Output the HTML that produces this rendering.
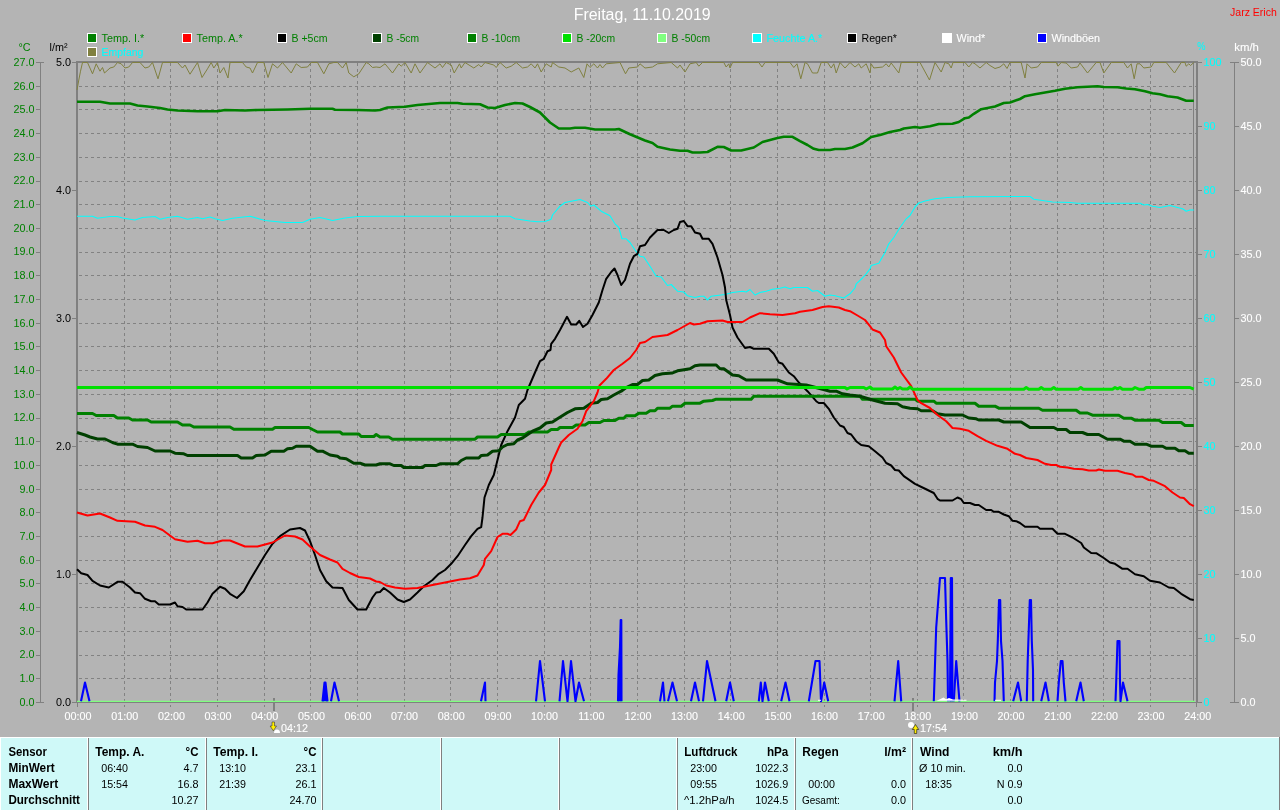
<!DOCTYPE html><html><head><meta charset="utf-8"><title>Freitag, 11.10.2019</title>
<style>html,body{margin:0;padding:0;background:#b4b4b4;overflow:hidden}body{width:1280px;height:810px;position:relative;font-family:"Liberation Sans",Arial,sans-serif}
svg{position:absolute;left:0;top:0;display:block;will-change:transform}
svg text{font-family:"Liberation Sans",Arial,sans-serif;font-size:11.7px}svg.tb text{font-size:11.2px}
.t{font-size:16px;fill:#fff}.g{fill:#008000}.k{fill:#000}.c{fill:#00ffff;stroke:#00ffff;stroke-width:.1px}.w{fill:#fff;stroke:#fff;stroke-width:.12px}.r{fill:#ff0000}.e{text-anchor:end}svg.tb text.b{font-weight:bold;font-size:12px}.m{text-anchor:middle}
.ln{fill:none;stroke-linejoin:round;stroke-linecap:butt}
</style></head><body>
<svg width="1280" height="810" viewBox="0 0 1280 810">
<rect width="1280" height="810" fill="#b4b4b4"/>
<text class="t m" x="642.2" y="20.3" textLength="137" lengthAdjust="spacingAndGlyphs">Freitag, 11.10.2019</text>
<text class="r e" transform="translate(1276.8 15.9) scale(0.923 1)" textLength="50.7" lengthAdjust="spacingAndGlyphs">Jarz Erich</text>
<rect x="87.5" y="33.5" width="9" height="9" fill="#008000" stroke="#fff" stroke-width="1"/>
<text class="g" transform="translate(101.5 42.0) scale(0.923 1)">Temp. I.*</text>
<rect x="182.5" y="33.5" width="9" height="9" fill="#ff0000" stroke="#fff" stroke-width="1"/>
<text class="g" transform="translate(196.5 42.0) scale(0.923 1)">Temp. A.*</text>
<rect x="277.5" y="33.5" width="9" height="9" fill="#000000" stroke="#fff" stroke-width="1"/>
<text class="g" transform="translate(291.5 42.0) scale(0.923 1)" textLength="39.0" lengthAdjust="spacingAndGlyphs">B +5cm</text>
<rect x="372.5" y="33.5" width="9" height="9" fill="#004000" stroke="#fff" stroke-width="1"/>
<text class="g" transform="translate(386.5 42.0) scale(0.923 1)" textLength="35.3" lengthAdjust="spacingAndGlyphs">B -5cm</text>
<rect x="467.5" y="33.5" width="9" height="9" fill="#008000" stroke="#fff" stroke-width="1"/>
<text class="g" transform="translate(481.5 42.0) scale(0.923 1)" textLength="41.8" lengthAdjust="spacingAndGlyphs">B -10cm</text>
<rect x="562.5" y="33.5" width="9" height="9" fill="#00e000" stroke="#fff" stroke-width="1"/>
<text class="g" transform="translate(576.5 42.0) scale(0.923 1)" textLength="41.8" lengthAdjust="spacingAndGlyphs">B -20cm</text>
<rect x="657.5" y="33.5" width="9" height="9" fill="#80ff80" stroke="#fff" stroke-width="1"/>
<text class="g" transform="translate(671.5 42.0) scale(0.923 1)" textLength="41.8" lengthAdjust="spacingAndGlyphs">B -50cm</text>
<rect x="752.5" y="33.5" width="9" height="9" fill="#00ffff" stroke="#fff" stroke-width="1"/>
<text class="c" transform="translate(766.5 42.0) scale(0.923 1)">Feuchte A.*</text>
<rect x="847.5" y="33.5" width="9" height="9" fill="#000000" stroke="#fff" stroke-width="1"/>
<text class="k" transform="translate(861.5 42.0) scale(0.923 1)" textLength="38.4" lengthAdjust="spacingAndGlyphs">Regen*</text>
<rect x="942.5" y="33.5" width="9" height="9" fill="#ffffff" stroke="#fff" stroke-width="1"/>
<text class="w" transform="translate(956.5 42.0) scale(0.923 1)">Wind*</text>
<rect x="1037.5" y="33.5" width="9" height="9" fill="#0000ff" stroke="#fff" stroke-width="1"/>
<text class="w" transform="translate(1051.5 42.0) scale(0.923 1)">Windböen</text>
<rect x="87.5" y="47.5" width="9" height="9" fill="#808040" stroke="#fff" stroke-width="1"/>
<text class="c" transform="translate(101.5 56.0) scale(0.923 1)" textLength="45.3" lengthAdjust="spacingAndGlyphs">Empfang</text>
<text class="g e" transform="translate(30.5 51.0) scale(0.923 1)">°C</text>
<text class="k e" transform="translate(67.5 51.0) scale(0.923 1)">l/m²</text>
<text class="c" transform="translate(1197.3 50.2) scale(0.923 1)" textLength="8.9" lengthAdjust="spacingAndGlyphs">%</text>
<text class="w" transform="translate(1234.3 51.0) scale(0.923 1)" textLength="26.7" lengthAdjust="spacingAndGlyphs">km/h</text>
<g stroke="#828282" stroke-width="1" stroke-dasharray="3 3" shape-rendering="crispEdges" fill="none">
<line x1="79" x2="1196" y1="678.5" y2="678.5"/>
<line x1="79" x2="1196" y1="655.5" y2="655.5"/>
<line x1="79" x2="1196" y1="631.5" y2="631.5"/>
<line x1="79" x2="1196" y1="607.5" y2="607.5"/>
<line x1="79" x2="1196" y1="583.5" y2="583.5"/>
<line x1="79" x2="1196" y1="560.5" y2="560.5"/>
<line x1="79" x2="1196" y1="536.5" y2="536.5"/>
<line x1="79" x2="1196" y1="512.5" y2="512.5"/>
<line x1="79" x2="1196" y1="489.5" y2="489.5"/>
<line x1="79" x2="1196" y1="465.5" y2="465.5"/>
<line x1="79" x2="1196" y1="441.5" y2="441.5"/>
<line x1="79" x2="1196" y1="418.5" y2="418.5"/>
<line x1="79" x2="1196" y1="394.5" y2="394.5"/>
<line x1="79" x2="1196" y1="370.5" y2="370.5"/>
<line x1="79" x2="1196" y1="346.5" y2="346.5"/>
<line x1="79" x2="1196" y1="323.5" y2="323.5"/>
<line x1="79" x2="1196" y1="299.5" y2="299.5"/>
<line x1="79" x2="1196" y1="275.5" y2="275.5"/>
<line x1="79" x2="1196" y1="252.5" y2="252.5"/>
<line x1="79" x2="1196" y1="228.5" y2="228.5"/>
<line x1="79" x2="1196" y1="204.5" y2="204.5"/>
<line x1="79" x2="1196" y1="181.5" y2="181.5"/>
<line x1="79" x2="1196" y1="157.5" y2="157.5"/>
<line x1="79" x2="1196" y1="133.5" y2="133.5"/>
<line x1="79" x2="1196" y1="109.5" y2="109.5"/>
<line x1="79" x2="1196" y1="86.5" y2="86.5"/>
<line x1="124.5" x2="124.5" y1="63" y2="707"/>
<line x1="170.5" x2="170.5" y1="63" y2="707"/>
<line x1="217.5" x2="217.5" y1="63" y2="707"/>
<line x1="264.5" x2="264.5" y1="63" y2="707"/>
<line x1="310.5" x2="310.5" y1="63" y2="707"/>
<line x1="357.5" x2="357.5" y1="63" y2="707"/>
<line x1="404.5" x2="404.5" y1="63" y2="707"/>
<line x1="450.5" x2="450.5" y1="63" y2="707"/>
<line x1="497.5" x2="497.5" y1="63" y2="707"/>
<line x1="544.5" x2="544.5" y1="63" y2="707"/>
<line x1="590.5" x2="590.5" y1="63" y2="707"/>
<line x1="637.5" x2="637.5" y1="63" y2="707"/>
<line x1="684.5" x2="684.5" y1="63" y2="707"/>
<line x1="730.5" x2="730.5" y1="63" y2="707"/>
<line x1="777.5" x2="777.5" y1="63" y2="707"/>
<line x1="824.5" x2="824.5" y1="63" y2="707"/>
<line x1="870.5" x2="870.5" y1="63" y2="707"/>
<line x1="917.5" x2="917.5" y1="63" y2="707"/>
<line x1="963.5" x2="963.5" y1="63" y2="707"/>
<line x1="1010.5" x2="1010.5" y1="63" y2="707"/>
<line x1="1057.5" x2="1057.5" y1="63" y2="707"/>
<line x1="1103.5" x2="1103.5" y1="63" y2="707"/>
<line x1="1150.5" x2="1150.5" y1="63" y2="707"/>
</g>
<g fill="#808080" shape-rendering="crispEdges">
<rect x="76" y="61" width="1122" height="2"/>
<rect x="76" y="61" width="2" height="642"/>
<rect x="1193" y="61" width="1" height="642"/>
<rect x="1196" y="61" width="2" height="642"/>
<rect x="40" y="62" width="1" height="641"/>
<rect x="1234" y="62" width="1" height="641"/>
<rect x="76" y="702" width="1120" height="1"/>
<rect x="36" y="702" width="8" height="1"/>
<rect x="36" y="678" width="4" height="1"/>
<rect x="36" y="655" width="4" height="1"/>
<rect x="36" y="631" width="4" height="1"/>
<rect x="36" y="607" width="4" height="1"/>
<rect x="36" y="583" width="4" height="1"/>
<rect x="36" y="560" width="4" height="1"/>
<rect x="36" y="536" width="4" height="1"/>
<rect x="36" y="512" width="4" height="1"/>
<rect x="36" y="489" width="4" height="1"/>
<rect x="36" y="465" width="4" height="1"/>
<rect x="36" y="441" width="4" height="1"/>
<rect x="36" y="418" width="4" height="1"/>
<rect x="36" y="394" width="4" height="1"/>
<rect x="36" y="370" width="4" height="1"/>
<rect x="36" y="346" width="4" height="1"/>
<rect x="36" y="323" width="4" height="1"/>
<rect x="36" y="299" width="4" height="1"/>
<rect x="36" y="275" width="4" height="1"/>
<rect x="36" y="252" width="4" height="1"/>
<rect x="36" y="228" width="4" height="1"/>
<rect x="36" y="204" width="4" height="1"/>
<rect x="36" y="181" width="4" height="1"/>
<rect x="36" y="157" width="4" height="1"/>
<rect x="36" y="133" width="4" height="1"/>
<rect x="36" y="109" width="4" height="1"/>
<rect x="36" y="86" width="4" height="1"/>
<rect x="36" y="62" width="8" height="1"/>
<rect x="72" y="702" width="5" height="1"/>
<rect x="72" y="574" width="5" height="1"/>
<rect x="72" y="446" width="5" height="1"/>
<rect x="72" y="318" width="5" height="1"/>
<rect x="72" y="190" width="5" height="1"/>
<rect x="72" y="62" width="5" height="1"/>
<rect x="1198" y="702" width="4" height="1"/>
<rect x="1230" y="702" width="9" height="1"/>
<rect x="1198" y="638" width="4" height="1"/>
<rect x="1235" y="638" width="4" height="1"/>
<rect x="1198" y="574" width="4" height="1"/>
<rect x="1235" y="574" width="4" height="1"/>
<rect x="1198" y="510" width="4" height="1"/>
<rect x="1235" y="510" width="4" height="1"/>
<rect x="1198" y="446" width="4" height="1"/>
<rect x="1235" y="446" width="4" height="1"/>
<rect x="1198" y="382" width="4" height="1"/>
<rect x="1235" y="382" width="4" height="1"/>
<rect x="1198" y="318" width="4" height="1"/>
<rect x="1235" y="318" width="4" height="1"/>
<rect x="1198" y="254" width="4" height="1"/>
<rect x="1235" y="254" width="4" height="1"/>
<rect x="1198" y="190" width="4" height="1"/>
<rect x="1235" y="190" width="4" height="1"/>
<rect x="1198" y="126" width="4" height="1"/>
<rect x="1235" y="126" width="4" height="1"/>
<rect x="1198" y="62" width="4" height="1"/>
<rect x="1230" y="62" width="9" height="1"/>
<rect x="77" y="703" width="1" height="4"/>
<rect x="1196" y="703" width="1" height="4"/>
<rect x="273" y="698" width="2" height="13"/>
<rect x="912" y="698" width="2" height="13"/>
</g>
<text class="g e" transform="translate(34.5 705.8) scale(0.923 1)">0.0</text>
<text class="g e" transform="translate(34.5 682.1) scale(0.923 1)">1.0</text>
<text class="g e" transform="translate(34.5 658.4) scale(0.923 1)">2.0</text>
<text class="g e" transform="translate(34.5 634.7) scale(0.923 1)">3.0</text>
<text class="g e" transform="translate(34.5 611.0) scale(0.923 1)">4.0</text>
<text class="g e" transform="translate(34.5 587.3) scale(0.923 1)">5.0</text>
<text class="g e" transform="translate(34.5 563.6) scale(0.923 1)">6.0</text>
<text class="g e" transform="translate(34.5 539.9) scale(0.923 1)">7.0</text>
<text class="g e" transform="translate(34.5 516.2) scale(0.923 1)">8.0</text>
<text class="g e" transform="translate(34.5 492.5) scale(0.923 1)">9.0</text>
<text class="g e" transform="translate(34.5 468.8) scale(0.923 1)">10.0</text>
<text class="g e" transform="translate(34.5 445.1) scale(0.923 1)">11.0</text>
<text class="g e" transform="translate(34.5 421.4) scale(0.923 1)">12.0</text>
<text class="g e" transform="translate(34.5 397.7) scale(0.923 1)">13.0</text>
<text class="g e" transform="translate(34.5 373.9) scale(0.923 1)">14.0</text>
<text class="g e" transform="translate(34.5 350.2) scale(0.923 1)">15.0</text>
<text class="g e" transform="translate(34.5 326.5) scale(0.923 1)">16.0</text>
<text class="g e" transform="translate(34.5 302.8) scale(0.923 1)">17.0</text>
<text class="g e" transform="translate(34.5 279.1) scale(0.923 1)">18.0</text>
<text class="g e" transform="translate(34.5 255.4) scale(0.923 1)">19.0</text>
<text class="g e" transform="translate(34.5 231.7) scale(0.923 1)">20.0</text>
<text class="g e" transform="translate(34.5 208.0) scale(0.923 1)">21.0</text>
<text class="g e" transform="translate(34.5 184.3) scale(0.923 1)">22.0</text>
<text class="g e" transform="translate(34.5 160.6) scale(0.923 1)">23.0</text>
<text class="g e" transform="translate(34.5 136.9) scale(0.923 1)">24.0</text>
<text class="g e" transform="translate(34.5 113.2) scale(0.923 1)">25.0</text>
<text class="g e" transform="translate(34.5 89.5) scale(0.923 1)">26.0</text>
<text class="g e" transform="translate(34.5 65.8) scale(0.923 1)">27.0</text>
<text class="k e" transform="translate(71.0 705.8) scale(0.923 1)">0.0</text>
<text class="k e" transform="translate(71.0 577.8) scale(0.923 1)">1.0</text>
<text class="k e" transform="translate(71.0 449.8) scale(0.923 1)">2.0</text>
<text class="k e" transform="translate(71.0 321.8) scale(0.923 1)">3.0</text>
<text class="k e" transform="translate(71.0 193.8) scale(0.923 1)">4.0</text>
<text class="k e" transform="translate(71.0 65.8) scale(0.923 1)">5.0</text>
<text class="c" transform="translate(1203.5 705.8) scale(0.923 1)">0</text>
<text class="w" transform="translate(1240.5 705.8) scale(0.923 1)">0.0</text>
<text class="c" transform="translate(1203.5 641.8) scale(0.923 1)">10</text>
<text class="w" transform="translate(1240.5 641.8) scale(0.923 1)">5.0</text>
<text class="c" transform="translate(1203.5 577.8) scale(0.923 1)">20</text>
<text class="w" transform="translate(1240.5 577.8) scale(0.923 1)">10.0</text>
<text class="c" transform="translate(1203.5 513.8) scale(0.923 1)">30</text>
<text class="w" transform="translate(1240.5 513.8) scale(0.923 1)">15.0</text>
<text class="c" transform="translate(1203.5 449.8) scale(0.923 1)">40</text>
<text class="w" transform="translate(1240.5 449.8) scale(0.923 1)">20.0</text>
<text class="c" transform="translate(1203.5 385.8) scale(0.923 1)">50</text>
<text class="w" transform="translate(1240.5 385.8) scale(0.923 1)">25.0</text>
<text class="c" transform="translate(1203.5 321.8) scale(0.923 1)">60</text>
<text class="w" transform="translate(1240.5 321.8) scale(0.923 1)">30.0</text>
<text class="c" transform="translate(1203.5 257.8) scale(0.923 1)">70</text>
<text class="w" transform="translate(1240.5 257.8) scale(0.923 1)">35.0</text>
<text class="c" transform="translate(1203.5 193.8) scale(0.923 1)">80</text>
<text class="w" transform="translate(1240.5 193.8) scale(0.923 1)">40.0</text>
<text class="c" transform="translate(1203.5 129.8) scale(0.923 1)">90</text>
<text class="w" transform="translate(1240.5 129.8) scale(0.923 1)">45.0</text>
<text class="c" transform="translate(1203.5 65.8) scale(0.923 1)">100</text>
<text class="w" transform="translate(1240.5 65.8) scale(0.923 1)">50.0</text>
<text class="w m" transform="translate(78.1 720.3) scale(0.923 1)">00:00</text>
<text class="w m" transform="translate(124.8 720.3) scale(0.923 1)">01:00</text>
<text class="w m" transform="translate(171.4 720.3) scale(0.923 1)">02:00</text>
<text class="w m" transform="translate(218.1 720.3) scale(0.923 1)">03:00</text>
<text class="w m" transform="translate(264.7 720.3) scale(0.923 1)">04:00</text>
<text class="w m" transform="translate(311.4 720.3) scale(0.923 1)">05:00</text>
<text class="w m" transform="translate(358.0 720.3) scale(0.923 1)">06:00</text>
<text class="w m" transform="translate(404.6 720.3) scale(0.923 1)">07:00</text>
<text class="w m" transform="translate(451.3 720.3) scale(0.923 1)">08:00</text>
<text class="w m" transform="translate(498.0 720.3) scale(0.923 1)">09:00</text>
<text class="w m" transform="translate(544.6 720.3) scale(0.923 1)">10:00</text>
<text class="w m" transform="translate(591.3 720.3) scale(0.923 1)">11:00</text>
<text class="w m" transform="translate(637.9 720.3) scale(0.923 1)">12:00</text>
<text class="w m" transform="translate(684.6 720.3) scale(0.923 1)">13:00</text>
<text class="w m" transform="translate(731.2 720.3) scale(0.923 1)">14:00</text>
<text class="w m" transform="translate(777.9 720.3) scale(0.923 1)">15:00</text>
<text class="w m" transform="translate(824.5 720.3) scale(0.923 1)">16:00</text>
<text class="w m" transform="translate(871.2 720.3) scale(0.923 1)">17:00</text>
<text class="w m" transform="translate(917.8 720.3) scale(0.923 1)">18:00</text>
<text class="w m" transform="translate(964.5 720.3) scale(0.923 1)">19:00</text>
<text class="w m" transform="translate(1011.1 720.3) scale(0.923 1)">20:00</text>
<text class="w m" transform="translate(1057.8 720.3) scale(0.923 1)">21:00</text>
<text class="w m" transform="translate(1104.4 720.3) scale(0.923 1)">22:00</text>
<text class="w m" transform="translate(1151.0 720.3) scale(0.923 1)">23:00</text>
<text class="w m" transform="translate(1197.7 720.3) scale(0.923 1)">24:00</text>
<polyline class="ln" stroke="#80ff80" stroke-width="1.2" points="77,701.3 1195,701.3"/>
<polyline class="ln" stroke="#808040" stroke-width="1" points="77.0,90.0 78.8,80.0 80.5,71.2 82.5,62.5 87.5,62.5 92.5,73.8 96.2,63.8 100.0,71.2 102.5,67.5 104.5,73.0 110.0,68.0 113.8,67.0 117.5,62.5 121.2,63.8 125.0,68.0 128.8,67.0 132.5,62.5 140.0,62.5 145.0,68.0 148.8,67.0 152.5,62.5 158.0,78.8 162.5,62.5 177.5,62.5 182.5,68.0 185.0,65.0 190.0,74.2 197.5,62.5 202.0,77.5 207.5,68.8 211.2,62.5 213.8,68.0 217.5,62.5 220.0,73.0 223.8,67.5 228.0,78.0 230.0,62.5 242.5,62.5 246.2,67.0 250.0,68.0 252.5,73.0 257.5,62.5 263.8,62.5 268.0,77.5 272.5,63.8 277.5,68.0 282.5,62.5 291.2,73.0 296.2,63.8 301.2,67.5 307.5,67.0 311.2,62.5 317.5,62.5 323.8,73.8 328.8,63.8 333.8,62.5 337.5,62.5 342.5,68.0 346.2,62.5 348.8,73.0 353.8,76.8 358.8,73.8 366.2,62.5 368.8,63.8 372.5,67.5 376.2,67.0 380.0,67.5 385.0,63.8 392.5,73.0 398.8,63.8 401.2,66.2 405.0,62.5 411.2,73.0 415.0,63.8 420.0,73.0 427.5,62.5 435.0,68.0 440.0,63.8 442.5,67.5 446.2,62.5 451.2,65.0 454.2,73.0 459.5,63.8 461.2,68.0 465.0,62.5 473.8,68.0 478.8,64.5 481.2,67.0 485.0,62.5 493.8,65.0 496.2,67.5 500.0,62.5 506.2,68.0 511.2,66.2 516.2,62.5 522.5,68.0 527.5,67.0 531.2,63.8 535.0,68.0 537.5,63.8 541.2,72.0 546.2,63.8 551.2,67.0 552.5,62.5 558.8,67.0 565.0,68.0 571.2,72.0 578.8,68.0 583.8,77.5 587.0,63.8 590.0,67.5 593.8,63.8 597.5,68.0 600.0,64.5 602.5,68.0 606.2,63.8 620.0,62.5 625.5,73.8 628.8,68.0 637.5,67.0 640.0,63.8 645.0,68.0 652.5,67.0 657.5,63.8 671.2,62.5 677.5,68.0 680.0,65.0 685.0,72.0 690.0,63.8 696.2,62.5 698.8,66.2 700.0,65.0 702.5,62.5 723.8,62.5 726.2,67.0 728.8,63.8 730.0,68.0 732.5,62.5 758.8,62.5 762.0,67.0 765.0,62.5 790.0,62.5 793.8,67.5 797.0,63.8 800.8,78.8 805.0,62.5 807.5,63.8 812.5,73.0 817.5,73.0 821.2,62.5 827.5,62.5 831.2,68.0 833.8,63.8 836.2,73.0 840.0,62.5 845.0,68.0 850.0,62.5 855.0,67.0 858.8,63.8 861.2,68.0 866.2,63.8 870.0,73.0 871.2,63.8 873.8,68.0 882.5,67.0 886.2,63.8 888.8,67.0 891.2,63.0 898.8,73.0 901.2,62.5 920.0,62.5 929.5,80.0 935.0,62.5 941.2,72.0 945.0,62.5 948.8,63.8 951.2,68.0 953.0,62.5 965.0,62.5 968.8,67.0 972.5,62.5 975.0,63.8 980.0,68.0 986.2,62.5 990.0,65.5 995.0,68.5 1000.0,67.0 1003.8,63.8 1007.0,68.5 1010.0,62.5 1020.0,62.5 1021.2,62.5 1025.0,78.0 1027.0,63.8 1031.2,68.0 1037.5,67.0 1041.2,62.5 1056.2,62.5 1058.0,66.2 1061.2,62.5 1066.2,63.0 1071.2,68.0 1077.5,67.0 1080.0,63.0 1087.5,73.0 1096.2,62.5 1100.0,62.5 1103.8,73.0 1111.2,62.5 1123.8,62.5 1127.5,68.0 1131.2,63.8 1134.2,78.8 1137.0,63.8 1140.0,63.8 1143.8,68.0 1151.2,67.0 1153.8,62.5 1166.2,62.5 1174.5,73.0 1181.2,62.5 1185.0,62.5 1186.2,66.2 1188.8,63.8 1190.5,65.5 1193.8,62.5"/>
<polyline class="ln" stroke="#00ffff" stroke-width="1.1" points="77.0,216.2 92.5,216.2 97.5,218.2 110.0,216.5 117.5,216.5 122.5,218.0 135.0,220.0 142.5,217.5 155.0,216.5 160.0,219.2 167.5,217.5 177.5,216.2 187.5,219.2 197.5,217.5 202.5,218.8 210.0,217.0 215.0,218.8 222.5,220.5 232.5,218.2 250.0,216.2 265.0,220.5 285.0,222.5 302.5,222.5 310.0,219.2 320.0,217.5 332.5,220.5 345.0,218.0 357.5,216.5 380.0,216.2 510.0,216.2 515.0,218.8 530.0,221.0 537.5,221.8 545.0,221.5 551.2,219.2 552.5,215.0 560.0,206.2 565.0,202.5 580.0,199.5 587.5,202.5 590.8,206.2 593.8,205.0 601.2,211.2 610.0,215.8 615.0,223.8 618.8,227.5 622.0,238.8 626.2,238.8 630.0,242.5 635.0,250.0 640.0,256.2 643.8,257.0 650.0,266.2 656.2,276.2 661.2,277.0 667.5,285.5 671.2,284.5 677.5,291.2 683.8,292.0 687.5,295.8 695.0,297.5 700.0,296.2 703.8,296.2 707.5,300.0 711.2,296.2 725.0,294.5 732.5,292.5 742.5,291.2 746.2,292.0 750.0,289.5 755.0,295.0 760.0,292.5 766.2,291.2 772.5,289.2 780.0,288.2 785.0,287.0 790.0,288.8 793.8,287.5 807.5,287.5 812.5,291.2 817.5,290.5 825.0,296.2 830.0,295.0 835.0,295.8 843.8,298.0 850.0,293.8 855.0,288.0 856.2,283.8 862.5,278.0 866.2,273.8 870.0,268.8 871.2,265.5 878.8,263.2 885.0,252.5 888.8,243.8 893.8,237.5 900.0,227.5 906.2,218.8 910.0,215.5 915.0,207.0 918.8,203.0 925.0,201.0 935.0,198.8 947.5,197.5 970.0,196.8 1020.0,196.5 1030.0,196.5 1033.8,199.2 1042.5,200.5 1052.5,202.0 1070.0,202.5 1077.5,203.2 1140.0,203.2 1143.8,205.0 1147.5,204.5 1152.5,206.2 1160.0,207.5 1170.0,205.5 1177.5,207.5 1182.5,208.8 1186.2,211.2 1190.0,210.0 1193.8,210.0"/>
<polyline class="ln" stroke="#008000" stroke-width="2.6" points="77.0,101.8 100.0,101.8 110.0,103.5 130.0,103.5 137.5,105.5 147.5,106.5 160.0,108.0 167.5,109.5 177.5,110.5 197.5,111.2 217.5,111.2 225.0,110.0 245.0,110.5 257.5,110.0 287.5,109.5 310.0,108.8 332.5,108.8 335.0,109.8 357.5,110.0 375.0,110.5 380.0,110.0 387.5,107.5 405.0,106.8 417.5,105.0 440.0,103.0 457.5,103.0 462.5,103.8 480.0,104.2 487.5,107.5 495.0,108.0 505.0,105.0 515.0,103.0 522.5,103.5 530.0,107.0 540.0,112.5 550.0,122.5 558.8,128.5 570.0,128.5 575.0,127.8 585.0,127.8 595.0,129.5 615.0,129.5 618.8,129.0 630.0,134.2 645.0,140.5 652.5,143.0 657.5,146.8 670.0,149.5 680.0,150.8 687.5,150.8 692.5,152.5 700.0,152.5 707.5,152.0 717.5,146.8 723.8,147.0 731.2,150.5 741.2,150.5 753.8,147.5 762.5,142.0 777.5,138.0 783.8,136.8 792.5,136.8 800.0,141.2 807.5,145.0 813.8,148.8 818.8,150.0 830.0,150.0 835.0,149.0 845.0,149.0 852.5,147.5 862.5,143.2 871.2,137.0 880.0,135.0 890.0,132.0 900.0,130.0 903.8,128.5 915.0,127.0 920.0,127.8 930.0,126.2 938.8,124.0 952.5,123.8 958.8,122.0 965.0,118.2 968.8,117.5 973.8,113.8 981.2,109.2 987.5,108.0 995.0,106.5 1003.8,103.0 1010.0,102.5 1020.0,99.0 1025.0,96.2 1035.0,94.2 1045.0,92.5 1055.0,90.8 1065.0,88.8 1077.5,87.2 1087.5,86.8 1097.5,86.2 1103.8,87.0 1117.5,87.2 1126.2,88.5 1135.0,89.2 1145.0,91.2 1152.5,93.2 1160.0,94.2 1167.5,96.2 1177.5,97.5 1186.2,100.8 1193.8,100.8"/>
<polyline class="ln" stroke="#000" stroke-width="2" points="77.0,569.2 81.2,573.2 87.5,575.0 92.5,580.8 100.0,585.5 108.8,587.5 117.5,581.8 122.5,581.8 130.0,587.5 135.0,592.5 140.0,593.2 145.0,598.8 151.2,601.2 155.0,601.2 158.8,604.5 170.0,604.5 175.0,602.5 177.5,606.2 182.5,607.0 186.2,609.5 202.5,609.5 207.5,602.5 212.5,593.8 220.0,586.8 225.0,588.8 230.0,593.8 237.0,598.0 243.8,591.2 250.0,580.0 257.5,567.5 265.0,555.0 272.5,543.8 280.0,536.2 290.0,529.5 300.0,528.0 305.0,530.5 310.0,541.2 315.0,555.0 320.0,570.0 326.2,581.2 332.5,587.5 342.5,588.0 348.8,600.0 357.5,609.5 366.2,609.5 372.5,597.5 376.2,592.5 380.0,592.0 383.8,588.0 390.0,592.5 397.5,599.5 403.8,602.0 410.0,599.5 417.5,592.5 423.8,586.2 432.5,580.0 438.8,573.8 445.0,570.0 451.2,563.8 457.5,556.2 465.0,545.0 471.2,536.2 477.5,528.8 481.2,527.0 482.5,517.5 484.5,497.5 488.8,485.0 493.8,475.0 497.5,460.0 501.2,445.0 507.5,431.2 515.0,417.5 518.8,405.0 525.0,398.8 527.5,390.0 535.0,372.5 540.0,361.2 543.8,358.8 547.5,351.2 550.5,350.0 551.2,343.8 555.0,338.8 560.0,330.0 567.0,316.8 571.2,324.5 576.2,324.5 579.2,320.8 583.0,327.0 587.5,323.8 592.5,315.0 598.8,302.5 602.5,290.0 606.2,278.8 611.2,272.0 614.5,268.5 617.5,275.0 621.2,285.0 625.0,280.0 630.0,263.8 633.8,256.2 637.5,253.8 640.0,246.2 645.0,245.0 650.0,237.5 657.5,230.0 663.8,230.0 668.8,233.0 673.8,230.0 677.5,228.8 680.0,222.0 683.8,221.0 687.5,226.2 691.2,226.2 695.0,232.5 700.0,233.8 702.5,238.8 708.8,238.8 712.5,243.8 717.5,257.5 722.5,275.0 725.0,287.5 726.2,300.0 730.0,315.0 732.5,327.5 737.5,337.5 745.0,348.0 750.0,347.0 753.8,348.8 768.8,348.8 773.8,353.8 778.8,362.5 782.5,363.8 788.8,372.5 793.8,376.2 798.8,382.5 807.5,391.2 816.2,401.2 818.8,403.0 823.8,403.0 828.8,408.8 833.8,417.5 840.0,425.5 843.8,427.0 847.5,433.0 851.2,434.5 856.2,441.2 861.2,445.0 868.8,446.2 875.0,451.2 882.5,457.5 886.2,463.0 891.2,465.5 895.0,470.0 898.8,470.5 903.8,476.2 915.0,483.8 922.5,487.5 933.8,493.0 937.5,498.8 940.0,500.5 952.5,500.5 957.5,497.5 961.2,499.2 963.8,503.0 970.0,503.0 975.0,505.0 978.8,505.0 986.2,510.0 991.2,510.0 993.8,511.8 998.8,511.8 1003.8,514.5 1008.8,516.2 1012.5,520.8 1016.2,521.2 1020.0,523.0 1025.0,526.8 1037.5,526.8 1040.0,528.8 1052.5,528.8 1057.5,533.8 1065.0,533.8 1072.5,537.5 1081.2,543.0 1083.8,547.5 1091.2,553.0 1096.2,553.2 1103.8,558.0 1110.0,562.5 1115.0,563.8 1122.5,568.8 1127.5,568.8 1135.0,574.2 1143.8,576.2 1150.0,580.8 1160.0,582.5 1168.8,587.5 1173.8,588.0 1181.2,593.8 1190.0,599.2 1193.8,600.0"/>
<polyline class="ln" stroke="#008000" stroke-width="3" points="77.0,413.5 92.5,413.5 96.2,415.5 113.8,415.5 117.5,418.0 128.8,418.0 132.5,420.0 147.5,420.0 151.2,422.0 177.5,422.0 182.5,425.0 190.0,425.0 193.8,427.0 230.0,427.0 233.8,429.2 272.5,429.2 275.0,427.5 308.8,427.5 312.5,429.5 317.5,432.0 340.0,432.0 342.5,434.0 358.8,434.0 361.2,436.5 373.8,436.5 376.2,434.5 380.0,437.0 388.8,437.0 392.5,439.2 475.0,439.2 477.5,437.0 497.5,437.0 501.2,434.5 525.0,434.5 528.8,432.0 547.5,432.0 551.2,429.5 557.5,429.5 560.0,427.5 572.5,427.5 576.2,425.0 585.0,425.0 588.8,422.5 600.0,422.5 603.8,420.5 615.0,420.5 618.8,418.2 623.8,418.2 626.2,415.8 635.0,415.8 638.8,413.2 646.2,413.2 650.0,410.8 655.0,410.8 657.5,408.2 670.0,408.2 672.5,406.2 681.2,406.2 685.0,403.2 700.0,403.2 703.8,401.2 712.5,400.5 716.2,399.2 751.2,399.2 753.8,396.2 860.0,396.2 862.5,399.2 915.0,399.2 917.5,401.2 933.8,401.2 936.2,403.2 975.0,403.2 978.8,406.2 995.0,406.2 998.8,408.2 1020.0,408.2 1038.8,408.2 1042.5,410.2 1076.2,410.2 1080.0,413.0 1087.5,413.0 1092.5,415.2 1118.8,415.2 1123.8,418.2 1131.2,418.2 1135.0,420.2 1158.8,420.2 1162.5,422.5 1181.2,422.5 1185.0,425.5 1193.8,425.5"/>
<polyline class="ln" stroke="#004000" stroke-width="3" points="77.0,432.5 85.0,435.0 90.0,437.0 97.5,439.0 105.0,439.0 112.5,442.5 117.5,444.2 132.5,444.2 137.5,446.5 147.5,447.5 155.0,451.0 170.0,451.0 175.0,453.2 183.8,453.8 187.5,455.5 237.5,455.5 241.2,458.0 252.5,458.0 256.2,455.5 265.0,455.0 271.2,451.2 283.8,451.2 287.5,448.8 292.5,448.2 296.2,446.2 310.0,446.2 317.5,451.2 322.5,451.2 330.0,455.0 337.5,456.2 340.0,458.0 346.2,458.8 353.8,463.2 360.0,463.2 365.0,465.0 376.2,465.0 380.0,463.8 390.0,463.8 393.8,465.5 401.2,465.5 403.8,467.5 422.5,467.5 425.0,465.5 436.2,465.5 440.0,463.8 457.5,463.8 461.2,460.5 466.2,458.0 478.8,458.0 481.2,455.5 487.5,455.0 492.5,451.2 498.8,450.8 502.5,447.0 507.5,444.5 513.8,443.8 517.5,440.0 522.5,438.0 532.5,431.2 540.0,428.0 546.2,423.0 552.5,422.0 557.5,418.8 567.5,412.5 575.0,408.8 583.8,408.2 591.2,403.2 597.5,402.5 601.2,399.5 607.5,398.8 613.8,395.0 621.2,391.2 626.2,387.5 632.5,384.5 637.5,384.5 642.5,380.5 648.8,380.0 655.0,375.5 662.5,373.8 672.5,373.0 677.5,370.8 682.5,370.0 690.0,368.8 695.0,365.8 700.0,365.0 716.2,365.0 720.0,368.8 723.8,368.8 732.5,375.0 738.8,375.8 746.2,380.0 777.5,380.0 787.5,383.8 806.2,385.0 822.5,389.2 830.0,391.2 836.2,391.2 842.5,393.8 850.0,395.0 860.0,396.2 872.5,400.0 885.0,403.2 897.5,403.8 902.5,406.8 910.0,408.2 917.5,408.8 921.2,410.8 932.5,410.8 937.5,413.8 945.0,415.0 962.5,415.0 968.8,418.0 976.2,418.8 978.8,420.0 998.8,420.0 1003.8,422.0 1020.0,422.0 1021.2,422.0 1030.0,427.5 1053.8,427.5 1057.5,429.5 1066.2,429.5 1070.0,432.5 1082.5,432.5 1087.5,434.5 1098.8,434.5 1107.5,439.2 1120.0,439.2 1123.8,441.2 1130.0,441.2 1135.0,444.2 1146.2,444.2 1151.2,446.2 1162.5,446.2 1166.2,448.2 1175.0,448.2 1178.8,450.8 1185.0,450.8 1188.8,453.2 1193.8,453.2"/>
<polyline class="ln" stroke="#ff0000" stroke-width="2" points="77.0,512.5 87.5,515.5 100.0,513.5 110.0,517.5 117.5,520.8 135.0,521.8 145.0,525.5 155.0,526.8 162.5,530.0 175.0,539.2 187.5,541.8 197.5,540.8 205.0,543.2 212.5,543.2 222.5,540.5 230.0,540.5 245.0,546.5 257.5,546.5 272.5,542.5 285.0,535.5 295.0,536.5 302.5,539.5 310.0,546.5 320.0,555.0 330.0,559.5 337.5,562.5 342.5,568.8 350.0,573.0 358.8,577.0 370.0,578.5 376.2,581.5 380.0,582.0 386.2,585.5 395.0,587.5 405.0,588.8 417.5,588.0 430.0,585.5 445.0,582.5 460.0,579.5 470.0,578.2 477.5,575.5 483.8,565.0 485.0,558.8 491.2,551.2 497.5,537.0 502.5,533.8 507.5,533.8 510.5,535.0 516.2,529.5 520.0,521.2 523.8,520.0 531.2,505.0 538.8,492.5 545.0,485.0 551.2,470.0 551.2,464.5 558.8,447.5 561.2,442.5 568.8,435.0 577.5,428.8 582.5,421.2 586.2,411.2 593.8,401.2 597.5,392.5 599.5,385.5 606.2,378.8 613.8,370.0 622.5,363.8 630.0,358.0 636.2,350.0 640.0,343.0 645.0,342.0 652.5,337.0 667.5,335.0 677.5,330.0 690.0,323.0 693.8,324.5 700.0,323.8 707.5,321.2 722.5,320.5 727.5,322.0 742.5,322.0 750.0,317.5 760.0,313.2 770.0,314.2 782.5,315.0 795.0,313.2 800.0,311.8 812.5,310.0 822.5,307.0 828.8,306.2 838.8,307.5 845.0,310.0 850.0,311.2 857.5,315.5 865.0,320.0 870.0,326.2 872.5,329.5 880.0,332.5 885.0,340.0 886.2,346.2 893.8,357.5 901.2,372.5 911.2,386.2 917.5,400.0 921.2,403.2 930.0,408.0 937.5,415.0 946.2,421.2 952.5,428.0 960.0,428.8 968.8,430.8 977.5,436.2 986.2,440.8 997.5,445.8 1007.5,448.8 1015.0,453.8 1020.0,455.0 1026.2,458.0 1037.5,460.0 1045.0,463.8 1051.2,465.0 1056.2,465.0 1060.0,466.8 1067.5,467.5 1073.8,468.8 1082.5,469.2 1088.8,470.5 1096.2,470.5 1098.8,469.5 1105.0,470.8 1117.5,470.8 1125.0,473.0 1132.5,474.5 1136.2,476.8 1142.5,476.8 1148.8,480.0 1153.8,480.8 1165.0,486.2 1172.5,492.5 1180.0,497.5 1183.8,498.0 1190.0,504.2 1193.8,506.2"/>
<polyline class="ln" stroke="#00e000" stroke-width="3" points="77.0,387.5 845.0,387.5 847.0,389.0 850.0,387.5 863.8,387.5 866.2,389.0 870.0,387.0 872.5,389.0 892.5,389.0 895.0,387.0 897.5,389.0 900.0,387.5 902.5,389.0 907.5,389.0 910.0,387.0 912.5,389.2 1020.0,389.2 1023.8,389.2 1026.2,387.5 1028.8,389.2 1038.8,389.2 1041.2,387.5 1043.8,389.2 1051.2,389.2 1053.8,387.5 1056.2,389.2 1078.2,389.2 1080.8,387.5 1083.2,389.2 1112.5,389.2 1115.0,387.5 1117.5,388.8 1120.0,387.5 1122.5,389.2 1132.5,389.2 1135.0,387.5 1138.8,389.2 1143.8,389.2 1146.2,387.5 1190.0,387.5 1193.8,389.2"/>
<clipPath id="cp"><rect x="78" y="62" width="1118" height="640"/></clipPath><g clip-path="url(#cp)">
<polyline class="ln" stroke="#0000ff" stroke-width="2.1" stroke-linejoin="miter" stroke-miterlimit="2" points="81.0,701.3 85.0,682.5 89.5,701.3"/>
<polyline class="ln" style="fill:#0000ff" stroke="#0000ff" stroke-width="2.1" stroke-linejoin="miter" stroke-miterlimit="2" points="322.5,701.3 324.5,682.5 325.5,682.5 327.5,701.3"/>
<polyline class="ln" stroke="#0000ff" stroke-width="2.1" stroke-linejoin="miter" stroke-miterlimit="2" points="331.0,701.3 334.5,682.5 339.0,701.3"/>
<polyline class="ln" stroke="#0000ff" stroke-width="2.1" stroke-linejoin="miter" stroke-miterlimit="2" points="481.0,701.3 485.0,682.5 485.5,701.3"/>
<polyline class="ln" stroke="#0000ff" stroke-width="2.1" stroke-linejoin="miter" stroke-miterlimit="2" points="536.0,701.3 540.0,661.0 545.0,701.3"/>
<polyline class="ln" stroke="#0000ff" stroke-width="2.1" stroke-linejoin="miter" stroke-miterlimit="2" points="559.5,701.3 563.0,661.0 567.5,701.3 571.0,661.0 575.5,701.3 579.0,682.5 584.0,701.3"/>
<polyline class="ln" style="fill:#0000ff" stroke="#0000ff" stroke-width="2.1" stroke-linejoin="miter" stroke-miterlimit="2" points="618.0,701.3 618.5,675.0 620.0,647.0 620.7,620.0 621.3,620.0 621.5,701.3"/>
<polyline class="ln" stroke="#0000ff" stroke-width="2.1" stroke-linejoin="miter" stroke-miterlimit="2" points="660.0,701.3 663.0,682.5 664.5,701.3"/>
<polyline class="ln" stroke="#0000ff" stroke-width="2.1" stroke-linejoin="miter" stroke-miterlimit="2" points="668.0,701.3 672.5,682.5 677.0,701.3"/>
<polyline class="ln" stroke="#0000ff" stroke-width="2.1" stroke-linejoin="miter" stroke-miterlimit="2" points="691.0,701.3 695.0,682.5 699.0,701.3"/>
<polyline class="ln" stroke="#0000ff" stroke-width="2.1" stroke-linejoin="miter" stroke-miterlimit="2" points="703.0,701.3 707.0,661.0 715.5,701.3"/>
<polyline class="ln" stroke="#0000ff" stroke-width="2.1" stroke-linejoin="miter" stroke-miterlimit="2" points="726.2,701.3 730.0,682.5 733.8,701.3"/>
<polyline class="ln" stroke="#0000ff" stroke-width="2.1" stroke-linejoin="miter" stroke-miterlimit="2" points="758.8,701.3 760.8,682.5 762.5,701.3 765.0,682.5 768.8,701.3"/>
<polyline class="ln" stroke="#0000ff" stroke-width="2.1" stroke-linejoin="miter" stroke-miterlimit="2" points="781.2,701.3 785.5,682.5 789.5,701.3"/>
<polyline class="ln" stroke="#0000ff" stroke-width="2.1" stroke-linejoin="miter" stroke-miterlimit="2" points="808.8,701.3 815.5,661.0 819.5,661.0 821.0,701.3 824.2,682.5 828.2,701.3"/>
<polyline class="ln" stroke="#0000ff" stroke-width="2.1" stroke-linejoin="miter" stroke-miterlimit="2" points="894.5,701.3 898.2,661.0 901.2,701.3"/>
<polyline class="ln" stroke="#0000ff" stroke-width="2.1" stroke-linejoin="miter" stroke-miterlimit="2" points="933.8,701.3 936.2,627.5 940.0,578.0 945.0,578.0 946.2,620.0 947.5,661.0 948.0,701.3"/>
<polyline class="ln" style="fill:#0000ff" stroke="#0000ff" stroke-width="2.1" stroke-linejoin="miter" stroke-miterlimit="2" points="950.0,701.3 950.8,578.0 952.0,578.0 952.5,701.3"/>
<polyline class="ln" stroke="#0000ff" stroke-width="2.1" stroke-linejoin="miter" stroke-miterlimit="2" points="953.8,701.3 956.2,661.0 959.5,701.3"/>
<polyline class="ln" stroke="#0000ff" stroke-width="2.1" stroke-linejoin="miter" stroke-miterlimit="2" points="994.5,701.3 995.0,682.5 997.0,661.0 997.8,641.0 999.0,600.0 1000.2,600.0 1001.0,641.0 1002.5,661.0 1003.2,682.5 1003.8,701.3"/>
<polyline class="ln" stroke="#0000ff" stroke-width="2.1" stroke-linejoin="miter" stroke-miterlimit="2" points="1013.2,701.3 1018.0,682.5 1021.2,701.3"/>
<polyline class="ln" stroke="#0000ff" stroke-width="2.1" stroke-linejoin="miter" stroke-miterlimit="2" points="1026.8,701.3 1027.7,661.0 1029.8,600.0 1031.0,600.0 1031.8,641.0 1033.0,670.0 1033.2,701.3"/>
<polyline class="ln" stroke="#0000ff" stroke-width="2.1" stroke-linejoin="miter" stroke-miterlimit="2" points="1041.2,701.3 1045.5,682.5 1048.8,701.3"/>
<polyline class="ln" stroke="#0000ff" stroke-width="2.1" stroke-linejoin="miter" stroke-miterlimit="2" points="1057.5,701.3 1058.8,682.5 1060.8,661.0 1062.5,661.0 1063.8,682.5 1065.5,701.3"/>
<polyline class="ln" stroke="#0000ff" stroke-width="2.1" stroke-linejoin="miter" stroke-miterlimit="2" points="1076.2,701.3 1080.5,682.5 1083.8,701.3"/>
<polyline class="ln" stroke="#0000ff" stroke-width="2.1" stroke-linejoin="miter" stroke-miterlimit="2" points="1115.5,701.3 1116.2,682.5 1117.5,641.0 1119.5,641.0 1120.0,682.5 1120.5,701.3 1123.0,682.5 1127.5,701.3"/>
</g>
<polygon fill="#fff" points="936,700.8 939,699.8 943.5,697.4 946,699.3 949,697.9 953,699.6 966.5,699.8 966.5,700.8"/>
<rect x="995" y="699.8" width="6" height="1" fill="#fff"/>
<rect x="818" y="699.8" width="3" height="1" fill="#fff"/>
<g>
<path d="M272,722h2.5v4h2l-3.2,4.8l-3.2,-4.8h1.9z" fill="#ffee00" stroke="#222" stroke-width="0.5"/>
<path d="M274,733a3,3.6 0 0 1 6,0z" fill="#fff"/>
<circle cx="911" cy="725" r="3" fill="#fff"/>
<path d="M914.3,733.5h2.4v-4h2l-3.2,-5l-3.2,5h2z" fill="#ffee00" stroke="#111" stroke-width="0.6"/>
</g>
<text class="w" transform="translate(281.0 732.3) scale(0.923 1)">04:12</text>
<text class="w" transform="translate(920.0 732.3) scale(0.923 1)">17:54</text>
</svg>

<svg class="tb" width="1280" height="73" viewBox="0 737 1280 73" style="top:737px">
<rect x="0" y="737" width="1280" height="73" fill="#cff9f8"/>
<rect x="0" y="737" width="1280" height="1" fill="#fff"/>
<rect x="0" y="737" width="1" height="73" fill="#fff"/>
<rect x="1279" y="737" width="1" height="73" fill="#808080"/>
<rect x="87" y="738" width="1" height="72" fill="#fff"/><rect x="88" y="738" width="1" height="72" fill="#808080"/>
<rect x="205" y="738" width="1" height="72" fill="#fff"/><rect x="206" y="738" width="1" height="72" fill="#808080"/>
<rect x="321" y="738" width="1" height="72" fill="#fff"/><rect x="322" y="738" width="1" height="72" fill="#808080"/>
<rect x="440" y="738" width="1" height="72" fill="#fff"/><rect x="441" y="738" width="1" height="72" fill="#808080"/>
<rect x="558" y="738" width="1" height="72" fill="#fff"/><rect x="559" y="738" width="1" height="72" fill="#808080"/>
<rect x="676" y="738" width="1" height="72" fill="#fff"/><rect x="677" y="738" width="1" height="72" fill="#808080"/>
<rect x="794" y="738" width="1" height="72" fill="#fff"/><rect x="795" y="738" width="1" height="72" fill="#808080"/>
<rect x="911" y="738" width="1" height="72" fill="#fff"/><rect x="912" y="738" width="1" height="72" fill="#808080"/>
<text class="b" transform="translate(8.4 755.8) scale(0.960 1)" textLength="40.0" lengthAdjust="spacingAndGlyphs">Sensor</text>
<text class="b" transform="translate(8.4 771.7) scale(0.960 1)" textLength="48.2" lengthAdjust="spacingAndGlyphs">MinWert</text>
<text class="b" transform="translate(8.4 787.6) scale(0.960 1)" textLength="51.8" lengthAdjust="spacingAndGlyphs">MaxWert</text>
<text class="b" transform="translate(8.4 803.5) scale(0.960 1)" textLength="74.5" lengthAdjust="spacingAndGlyphs">Durchschnitt</text>
<text class="b" transform="translate(95.3 755.8) scale(0.960 1)" textLength="51.1" lengthAdjust="spacingAndGlyphs">Temp. A.</text>
<text class="b e" transform="translate(198.5 755.8) scale(0.960 1)">°C</text>
<text class="" transform="translate(101.2 771.7) scale(0.964 1)" textLength="27.8" lengthAdjust="spacingAndGlyphs">06:40</text>
<text class="e" transform="translate(198.5 771.7) scale(0.964 1)">4.7</text>
<text class="" transform="translate(101.2 787.6) scale(0.964 1)" textLength="27.8" lengthAdjust="spacingAndGlyphs">15:54</text>
<text class="e" transform="translate(198.5 787.6) scale(0.964 1)">16.8</text>
<text class="e" transform="translate(198.5 803.5) scale(0.964 1)">10.27</text>
<text class="b" transform="translate(213.3 755.8) scale(0.960 1)" textLength="46.8" lengthAdjust="spacingAndGlyphs">Temp. I.</text>
<text class="b e" transform="translate(316.5 755.8) scale(0.960 1)">°C</text>
<text class="" transform="translate(219.2 771.7) scale(0.964 1)" textLength="27.8" lengthAdjust="spacingAndGlyphs">13:10</text>
<text class="e" transform="translate(316.5 771.7) scale(0.964 1)">23.1</text>
<text class="" transform="translate(219.2 787.6) scale(0.964 1)" textLength="27.8" lengthAdjust="spacingAndGlyphs">21:39</text>
<text class="e" transform="translate(316.5 787.6) scale(0.964 1)">26.1</text>
<text class="e" transform="translate(316.5 803.5) scale(0.964 1)">24.70</text>
<text class="b" transform="translate(684.3 755.8) scale(0.960 1)" textLength="55.4" lengthAdjust="spacingAndGlyphs">Luftdruck</text>
<text class="b e" transform="translate(788.3 755.8) scale(0.960 1)" textLength="22.3" lengthAdjust="spacingAndGlyphs">hPa</text>
<text class="" transform="translate(690.2 771.7) scale(0.964 1)" textLength="27.8" lengthAdjust="spacingAndGlyphs">23:00</text>
<text class="e" transform="translate(788.3 771.7) scale(0.964 1)">1022.3</text>
<text class="" transform="translate(690.2 787.6) scale(0.964 1)" textLength="27.8" lengthAdjust="spacingAndGlyphs">09:55</text>
<text class="e" transform="translate(788.3 787.6) scale(0.964 1)">1026.9</text>
<text class="" transform="translate(684.0 803.5) scale(0.964 1)" textLength="52.5" lengthAdjust="spacingAndGlyphs">^1.2hPa/h</text>
<text class="e" transform="translate(788.3 803.5) scale(0.964 1)">1024.5</text>
<text class="b" transform="translate(802.3 755.8) scale(0.960 1)" textLength="37.9" lengthAdjust="spacingAndGlyphs">Regen</text>
<text class="b e" transform="translate(906.0 755.8) scale(0.960 1)" textLength="22.7" lengthAdjust="spacingAndGlyphs">l/m²</text>
<text class="" transform="translate(808.2 787.6) scale(0.964 1)" textLength="27.8" lengthAdjust="spacingAndGlyphs">00:00</text>
<text class="e" transform="translate(906.0 787.6) scale(0.964 1)">0.0</text>
<text class="" transform="translate(802.0 803.5) scale(0.964 1)" textLength="39.2" lengthAdjust="spacingAndGlyphs">Gesamt:</text>
<text class="e" transform="translate(906.0 803.5) scale(0.964 1)">0.0</text>
<text class="b" transform="translate(920.0 755.8) scale(0.960 1)" textLength="30.6" lengthAdjust="spacingAndGlyphs">Wind</text>
<text class="b e" transform="translate(1022.5 755.8) scale(0.960 1)" textLength="31.0" lengthAdjust="spacingAndGlyphs">km/h</text>
<text class="" transform="translate(919.0 771.7) scale(0.964 1)">Ø 10 min.</text>
<text class="e" transform="translate(1022.5 771.7) scale(0.964 1)">0.0</text>
<text class="" transform="translate(925.2 787.6) scale(0.964 1)" textLength="27.8" lengthAdjust="spacingAndGlyphs">18:35</text>
<text class="e" transform="translate(1022.5 787.6) scale(0.964 1)">N 0.9</text>
<text class="e" transform="translate(1022.5 803.5) scale(0.964 1)">0.0</text>
</svg>
</body></html>
